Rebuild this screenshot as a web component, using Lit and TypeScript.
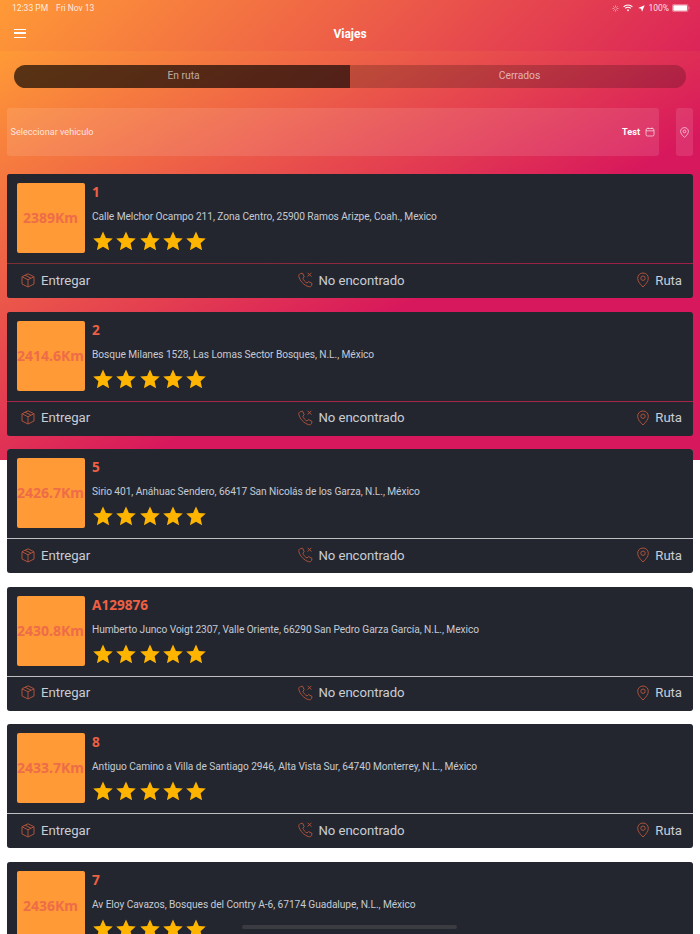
import { LitElement, html, css, svg } from 'lit';
import { customElement } from 'lit/decorators.js';

const trips = [
  { id: '1', km: '2389Km', line: 'warm', address: 'Calle Melchor Ocampo 211, Zona Centro, 25900 Ramos Arizpe, Coah., Mexico' },
  { id: '2', km: '2414.6Km', line: 'pink', address: 'Bosque Milanes 1528, Las Lomas Sector Bosques, N.L., México' },
  { id: '5', km: '2426.7Km', line: '', address: 'Sirio 401, Anáhuac Sendero, 66417 San Nicolás de los Garza, N.L., México' },
  { id: 'A129876', km: '2430.8Km', line: '', address: 'Humberto Junco Voigt 2307, Valle Oriente, 66290 San Pedro Garza García, N.L., Mexico' },
  { id: '8', km: '2433.7Km', line: '', address: 'Antiguo Camino a Villa de Santiago 2946, Alta Vista Sur, 64740 Monterrey, N.L., México' },
  { id: '7', km: '2436Km', line: '', address: 'Av Eloy Cavazos, Bosques del Contry A-6, 67174 Guadalupe, N.L., México', cut: true },
];

const starIcon = html`<svg class="star" viewBox="0 0 20 20"><polygon points="10,0.4 12.9,6.9 19.8,7.6 14.6,12.3 16.1,19.3 10,15.7 3.9,19.3 5.4,12.3 0.2,7.6 7.1,6.9"></polygon></svg>`;

const boxIcon = html`<svg class="act-icon" width="14" height="15" viewBox="0 0 14 15">
  <path d="M7 0.8 L13 3.7 V11 L7 14 L1 11 V3.7 Z M1 3.7 L7 6.8 L13 3.7 M7 6.8 V14 M4 2.2 L10 5.2"></path>
</svg>`;

const phoneIcon = html`<svg class="act-icon" width="15" height="16" viewBox="0 0 15 16">
  <path d="M2.6 1.6 L4.6 1.2 L6.2 4.8 L4.8 6.2 C5.4 8 7 10 9 11 L10.6 9.6 L14 11.4 L13.6 13.4 C13.2 14.6 12 15 10.8 14.7 C6 13.4 2 9 0.8 4.4 C0.5 3 1.3 2 2.6 1.6 Z"></path>
  <path d="M9.6 0.8 L13.4 4.6 M13.4 0.8 L9.6 4.6"></path>
</svg>`;

const pinIcon = html`<svg class="act-icon" width="12" height="16" viewBox="0 0 12 16">
  <path d="M6 15 C3 12 0.7 9.4 0.7 6.2 C0.7 3.2 3 1 6 1 C9 1 11.3 3.2 11.3 6.2 C11.3 9.4 9 12 6 15 Z"></path>
  <circle cx="6" cy="6.2" r="2.2"></circle>
</svg>`;

@customElement('app-root')
export class AppRoot extends LitElement {
  static styles = css`
    :host {
      display: block;
      position: relative;
      width: 700px;
      height: 934px;
      overflow: hidden;
      background: #fff;
      font-family: 'Roboto', sans-serif;
    }

    .header {
      height: 51px;
      background: linear-gradient(135deg, #ff9a36 0%, #d8185c 110%);
      color: #fff;
    }

    .status {
      height: 16px;
      padding: 0 10px 0 12px;
      display: flex;
      align-items: center;
      justify-content: space-between;
      font-size: 8.5px;
      color: rgba(255, 255, 255, 0.85);
    }

    .status-left {
      display: flex;
      gap: 8px;
    }

    .status-right {
      display: flex;
      align-items: center;
      gap: 3px;
    }

    .nav {
      height: 35px;
      display: flex;
      align-items: center;
      justify-content: center;
      position: relative;
      font-size: 12px;
      font-weight: 700;
    }

    .menu {
      position: absolute;
      left: 14px;
      top: 13px;
      width: 12px;
      height: 9px;
      border-top: 1.5px solid #fff;
      border-bottom: 1.5px solid #fff;
      box-sizing: border-box;
    }

    .menu::after {
      content: '';
      display: block;
      height: 1.5px;
      margin-top: 2.25px;
      background: #fff;
    }

    .content {
      padding: 13.5px 7px 0;
      background: linear-gradient(to bottom right, #ff9a36 0%, #d8185c 60%) no-repeat;
      background-size: 100% 409px;
    }

    .tabs {
      display: flex;
      height: 23px;
      margin: 0 7px;
      border-radius: 12px;
      overflow: hidden;
      font-size: 10.3px;
      color: rgba(255, 255, 255, 0.62);
    }

    .tab {
      flex: 1;
      box-sizing: border-box;
      padding: 0 0 1px 3px;
      display: flex;
      align-items: center;
      justify-content: center;
      background: rgba(0, 0, 0, 0.2);
    }

    .tab.active {
      background: rgba(0, 0, 0, 0.65);
    }

    .filters {
      display: flex;
      gap: 17px;
      height: 48px;
      margin-top: 20.5px;
      font-size: 9.1px;
    }

    .filter {
      display: flex;
      align-items: center;
      justify-content: center;
      border-radius: 3px;
      background: rgba(255, 255, 255, 0.11);
      color: rgba(255, 255, 255, 0.8);
    }

    .filter.vehicle {
      flex: 1;
      justify-content: space-between;
      padding: 0 4px 0 3.5px;
    }

    .filter.map {
      width: 17px;
    }

    .test {
      display: flex;
      align-items: center;
      gap: 5px;
      font-weight: 700;
      color: #fff;
    }

    .line-icon {
      fill: none;
      stroke: rgba(255, 255, 255, 0.6);
      stroke-width: 1;
    }

    .cards {
      display: flex;
      flex-direction: column;
      gap: 13.6px;
      margin-top: 18px;
    }

    .card {
      flex: none;
      height: 124px;
      display: flex;
      flex-direction: column;
      gap: 1px;
      border-radius: 3px;
      overflow: hidden;
      background: #c0c0c2;
    }

    .card.warm {
      background: linear-gradient(to right, #7c3034, #a01f4a);
    }

    .card.pink {
      background: #a8254a;
    }

    .card-top {
      height: 89px;
      box-sizing: border-box;
      padding: 9px 10px;
      display: flex;
      gap: 7px;
      background: #23262f;
    }

    .distance {
      width: 68px;
      height: 70px;
      flex: none;
      padding: 0 1px 1px 0;
      box-sizing: border-box;
      display: flex;
      align-items: center;
      justify-content: center;
      border-radius: 2px;
      background: #ff9a36;
      color: #ee6c48;
      font-family: 'Noto Sans', sans-serif;
      font-size: 14px;
      font-weight: 700;
      white-space: nowrap;
    }

    .trip-id {
      height: 18px;
      line-height: 18px;
      font-family: 'Noto Sans', sans-serif;
      font-size: 13.6px;
      font-weight: 700;
      color: #ee6044;
    }

    .address {
      height: 18px;
      line-height: 18px;
      margin-top: 7px;
      font-size: 10.2px;
      letter-spacing: -0.07px;
      color: #c6cad3;
      white-space: nowrap;
    }

    .stars {
      display: flex;
      gap: 3.35px;
      margin: 5px 0 0 1px;
    }

    .star {
      width: 20px;
      height: 20px;
      fill: #ffb400;
    }

    .card-footer {
      height: 34px;
      padding: 0 11px 2px 14px;
      box-sizing: border-box;
      display: grid;
      grid-template-columns: 1fr auto 1fr;
      align-items: center;
      background: #23262f;
      color: #c9cdd6;
      font-size: 13.2px;
      letter-spacing: -0.05px;
    }

    .action {
      display: flex;
      align-items: center;
      gap: 6px;
    }

    .action.middle {
      gap: 5px;
    }

    .action.end {
      justify-content: flex-end;
    }

    .act-icon {
      fill: none;
      stroke: #ad523a;
      stroke-width: 1;
      stroke-linejoin: round;
    }

    .home {
      position: absolute;
      left: 242px;
      top: 924.5px;
      width: 215px;
      height: 4px;
      border-radius: 2px;
      background: #3a3c42;
    }
  `;

  statusIcons() {
    return html`
      <svg width="7" height="7" viewBox="0 0 9 9" stroke="rgba(255,255,255,0.55)" stroke-width="1">
        ${[0, 45, 90, 135, 180, 225, 270, 315].map(a => svg`<line x1="4.5" y1="0.5" x2="4.5" y2="3" transform="rotate(${a} 4.5 4.5)"></line>`)}
      </svg>
      <svg width="10" height="8" viewBox="0 0 10 8" fill="none" stroke="#fff" stroke-width="1.2" style="margin-left:1px">
        <path d="M0.6 2.8 C3 0.4 7 0.4 9.4 2.8 M2.2 4.4 C3.7 3 6.3 3 7.8 4.4"></path>
        <path d="M3.8 5.9 L5 7.4 L6.2 5.9 C5.5 5.3 4.5 5.3 3.8 5.9 Z" fill="#fff" stroke="none"></path>
      </svg>
      <svg width="7" height="7" viewBox="0 0 8 8" style="margin:0 0 0 2px"><path d="M7.6 0.4 L4.6 7.8 L3.6 4.4 L0.2 3.4 Z" fill="#fff"></path></svg>
      <span>100%</span>
      <svg width="18" height="8" viewBox="0 0 18 8">
        <rect x="0.4" y="0.4" width="15.6" height="7.2" rx="1.6" fill="none" stroke="rgba(255,255,255,0.5)" stroke-width="0.8"></rect>
        <rect x="1.3" y="1.3" width="13.8" height="5.4" rx="0.8" fill="#fff"></rect>
        <path d="M16.8 2.8 C17.4 3 17.6 3.5 17.6 4 C17.6 4.5 17.4 5 16.8 5.2 Z" fill="rgba(255,255,255,0.5)"></path>
      </svg>
    `;
  }

  tripCard(trip: { id: string; km: string; line: string; address: string; cut?: boolean }) {
    return html`
      <div class="card ${trip.line}">
        <div class="card-top">
          <div class="distance">${trip.km}</div>
          <div>
            <div class="trip-id">${trip.id}</div>
            <div class="address">${trip.address}</div>
            <div class="stars">${[1, 2, 3, 4, 5].map(() => starIcon)}</div>
          </div>
        </div>
        ${trip.cut ? '' : html`
          <div class="card-footer">
            <div class="action">${boxIcon}<span>Entregar</span></div>
            <div class="action middle">${phoneIcon}<span>No encontrado</span></div>
            <div class="action end">${pinIcon}<span>Ruta</span></div>
          </div>
        `}
      </div>
    `;
  }

  render() {
    return html`
      <div class="header">
        <div class="status">
          <div class="status-left"><span>12:33 PM</span><span>Fri Nov 13</span></div>
          <div class="status-right">${this.statusIcons()}</div>
        </div>
        <div class="nav">
          <div class="menu"></div>
          <span>Viajes</span>
        </div>
      </div>
      <div class="content">
        <div class="tabs">
          <div class="tab active">En ruta</div>
          <div class="tab">Cerrados</div>
        </div>
        <div class="filters">
          <div class="filter vehicle">
            <span>Seleccionar vehiculo</span>
            <span class="test">Test
              <svg class="line-icon" width="10" height="10" viewBox="0 0 10 10">
                <rect x="1" y="1.5" width="8" height="7.5" rx="1.5"></rect>
                <path d="M1 3.8 H9 M3 0.5 V2 M7 0.5 V2"></path>
              </svg>
            </span>
          </div>
          <div class="filter map">
            <svg class="line-icon" width="9" height="11" viewBox="0 0 9 11">
              <path d="M4.5 10.4 C2.3 8.2 0.6 6.5 0.6 4.4 C0.6 2.2 2.3 0.6 4.5 0.6 C6.7 0.6 8.4 2.2 8.4 4.4 C8.4 6.5 6.7 8.2 4.5 10.4 Z"></path>
              <circle cx="4.5" cy="4.4" r="1.4"></circle>
            </svg>
          </div>
        </div>
        <div class="cards">${trips.map(t => this.tripCard(t))}</div>
      </div>
      <div class="home"></div>
    `;
  }
}
